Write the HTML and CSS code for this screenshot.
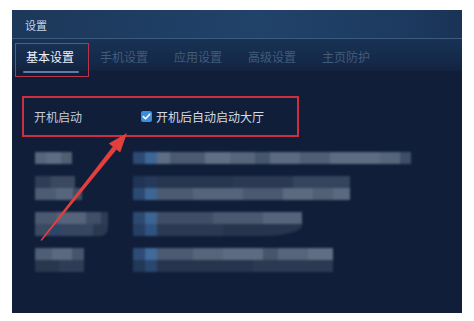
FILE: index.html
```html
<!DOCTYPE html>
<html lang="zh-CN">
<head>
<meta charset="utf-8">
<title>设置</title>
<link rel="stylesheet" href="styles.css">
</head>
<body>
<div class="panel">
  <div class="titlebar">设置</div>
  <div class="tabs">
    <div class="tab active"><span class="tab-label">基本设置</span><span class="tab-line"></span></div>
    <div class="tab"><span class="tab-label">手机设置</span></div>
    <div class="tab"><span class="tab-label">应用设置</span></div>
    <div class="tab"><span class="tab-label">高级设置</span></div>
    <div class="tab"><span class="tab-label">主页防护</span></div>
  </div>
  <div class="content">
    <div class="option-row">
      <span class="option-label">开机启动</span>
      <span class="check">
        <svg viewBox="0 0 11 11" width="11" height="11"><path d="M2.3 5.6 L4.5 7.8 L8.8 3.2" fill="none" stroke="#ffffff" stroke-width="1.6" stroke-linecap="round" stroke-linejoin="round"/></svg>
      </span>
      <span class="check-text">开机后自动启动大厅</span>
    </div>
    <div class="blur-list">
      <div class="blur-row r1">
        <div class="blur-left"><div class="bl bl1"></div></div>
        <div class="blur-right"><div class="br br1"></div></div>
      </div>
      <div class="blur-row r2">
        <div class="blur-left"><div class="bl bl2a"></div><div class="bl bl2b"></div></div>
        <div class="blur-right"><div class="br br2a"></div><div class="br br2b"></div></div>
      </div>
      <div class="blur-row r3">
        <div class="blur-left"><div class="bl bl3a"></div><div class="bl bl3b"></div></div>
        <div class="blur-right"><div class="br br3a"></div><div class="br br3b"></div></div>
      </div>
      <div class="blur-row r4">
        <div class="blur-left"><div class="bl bl4a"></div><div class="bl bl4b"></div></div>
        <div class="blur-right"><div class="br br4a"></div><div class="br br4b"></div></div>
      </div>
    </div>
  </div>
</div>
<svg class="arrow" width="474" height="321" viewBox="0 0 474 321">
  <polygon points="40.4,240.2 41.8,240.8 116.6,149.6 112.8,146.4" fill="#e2403c"/>
  <polygon points="127,133 120.2,152.6 108.8,143.6" fill="#e2403c"/>
</svg>
</body>
</html>
```
FILE: styles.css
```css
html, body {
  margin: 0;
  padding: 0;
  background: #ffffff;
}
body {
  width: 474px;
  height: 321px;
  position: relative;
  overflow: hidden;
  font-family: "Noto Sans CJK SC", "Noto Sans", sans-serif;
}
.panel {
  margin: 10px 0 0 12px;
  width: 450px;
  height: 303px;
  background: #111e39;
  display: flex;
  flex-direction: column;
}
.titlebar {
  height: 29px;
  flex: none;
  box-sizing: border-box;
  padding: 8px 0 0 13px;
  font-size: 11px;
  line-height: 14px;
  color: #c9d5e6;
  background: linear-gradient(90deg, #1c385a 0%, #21426a 55%, #1d3b60 85%, #1a3356 100%);
  border-bottom: 1px solid #3a5b7e;
}
.tabs {
  height: 32px;
  flex: none;
  display: flex;
  align-items: flex-start;
  padding: 4px 0 0 3px;
  box-sizing: border-box;
  background: linear-gradient(180deg, #183253 0%, #15294a 70%, #13223f 100%);
}
.tab {
  width: 74px;
  height: 34px;
  box-sizing: border-box;
  flex: none;
  display: flex;
  flex-direction: column;
  padding: 7px 0 0 11px;
  font-size: 12px;
  line-height: 14px;
  color: #415c7c;
}
.tab.active {
  color: #eef3f9;
  border: 1px solid #b8364a;
  padding: 6px 0 0 10px;
}
.tab-line {
  display: block;
  width: 56px;
  height: 2px;
  margin: 7px 0 0 -3px;
  background: #5b7ea8;
  border-radius: 1px;
}
.content {
  flex: 1;
  padding: 25px 0 0 10px;
}
.option-row {
  width: 277px;
  height: 41px;
  box-sizing: border-box;
  border: 2px solid #cc2f40;
  display: flex;
  align-items: center;
  padding-left: 10px;
  font-size: 12px;
  color: #c3cddb;
}
.option-label {
  width: 107px;
  flex: none;
}
.check {
  width: 11px;
  height: 11px;
  flex: none;
  background: #3b8edb;
  border-radius: 2px;
  display: flex;
  margin-right: 4px;
}
.check svg {
  display: block;
}
.check-text {
  color: #d3dbe6;
}
.blur-list {
  padding: 15px 0 0 13px;
  display: flex;
  flex-direction: column;
  filter: blur(0.8px);
}
.blur-row {
  display: flex;
}
.blur-left {
  width: 98px;
  flex: none;
  display: flex;
  flex-direction: column;
}
.blur-right {
  display: flex;
  flex-direction: column;
}
.bl, .br {
  height: 12px;
}
.r2, .r3, .r4 { margin-top: 12px; }

.bl1 {
  width: 37px;
  background: linear-gradient(90deg, #56657a 0 30%, #5d6c80 30% 70%, #515f74 70%);
}
.br1 {
  width: 278px;
  background: linear-gradient(90deg,
    #2d4a73 0 12px, #3d6796 12px 24px, #5e6e83 24px 37px, #4b5a70 37px 72px,
    #606f84 72px 97px, #56657a 97px 122px, #46566c 122px 137px, #5b6a80 137px 167px,
    #4f5e74 167px 197px, #5d6c81 197px 247px, #56667a 247px 267px, #3e4e66 267px);
}
.bl2a {
  width: 40px;
  background: linear-gradient(90deg, #2f3e56 0 40%, #3a4960 40%);
}
.bl2b {
  width: 47px;
  background: linear-gradient(90deg, #4d5c72 0 45%, #56667b 45% 80%, #3f4e66 80%);
}
.br2a {
  width: 217px;
  background: linear-gradient(90deg,
    #1f3456 0 12px, #24395c 12px 24px, #27364f 24px 100px, #2b3a52 100px 160px, #34445c 160px);
}
.br2b {
  width: 217px;
  background: linear-gradient(90deg,
    #2b4a72 0 12px, #3d6694 12px 24px, #4b5a70 24px 60px, #55647a 60px 110px,
    #4a596f 110px 150px, #5b6a7f 150px 180px, #525f74 180px 200px, #5a697e 200px);
}
.bl3a {
  width: 73px;
  background: linear-gradient(90deg, #4a596f 0 30%, #55647a 30% 70%, #414f66 70% 90%, #2e3c55 90%);
}
.bl3b {
  width: 73px;
  background: linear-gradient(90deg, #3a4a62 0 20%, #2c4568 20% 35%, #364660 35% 80%, #2a3850 80%);
  border-bottom-right-radius: 8px;
}
.br3a {
  width: 169px;
  background: linear-gradient(90deg,
    #2c4970 0 12px, #3c6593 12px 24px, #3f4e66 24px 80px, #4a596f 80px 130px, #55647a 130px);
}
.br3b {
  width: 169px;
  background: linear-gradient(90deg,
    #253f64 0 12px, #2f5280 12px 24px, #2b3a52 24px 90px, #27344d 90px);
  border-bottom-right-radius: 40px 10px;
}
.bl4a {
  width: 49px;
  background: linear-gradient(90deg, #4f5e74 0 35%, #5a697e 35% 75%, #465569 75%);
}
.bl4b {
  width: 49px;
  background: linear-gradient(90deg, #28364e 0 50%, #2e3c55 50%);
}
.br4a {
  width: 200px;
  background: linear-gradient(90deg,
    #2d4b74 0 12px, #3f6a9a 12px 24px, #4b5a70 24px 60px, #56657a 60px 90px,
    #5c6b80 90px 130px, #46556a 130px 145px, #56657a 145px 175px, #5f6e83 175px);
}
.br4b {
  width: 200px;
  background: linear-gradient(90deg,
    #213858 0 12px, #29466e 12px 24px, #26344d 24px 120px, #2b3a52 120px);
}
.arrow {
  position: absolute;
  left: 0;
  top: 0;
  pointer-events: none;
}
```
